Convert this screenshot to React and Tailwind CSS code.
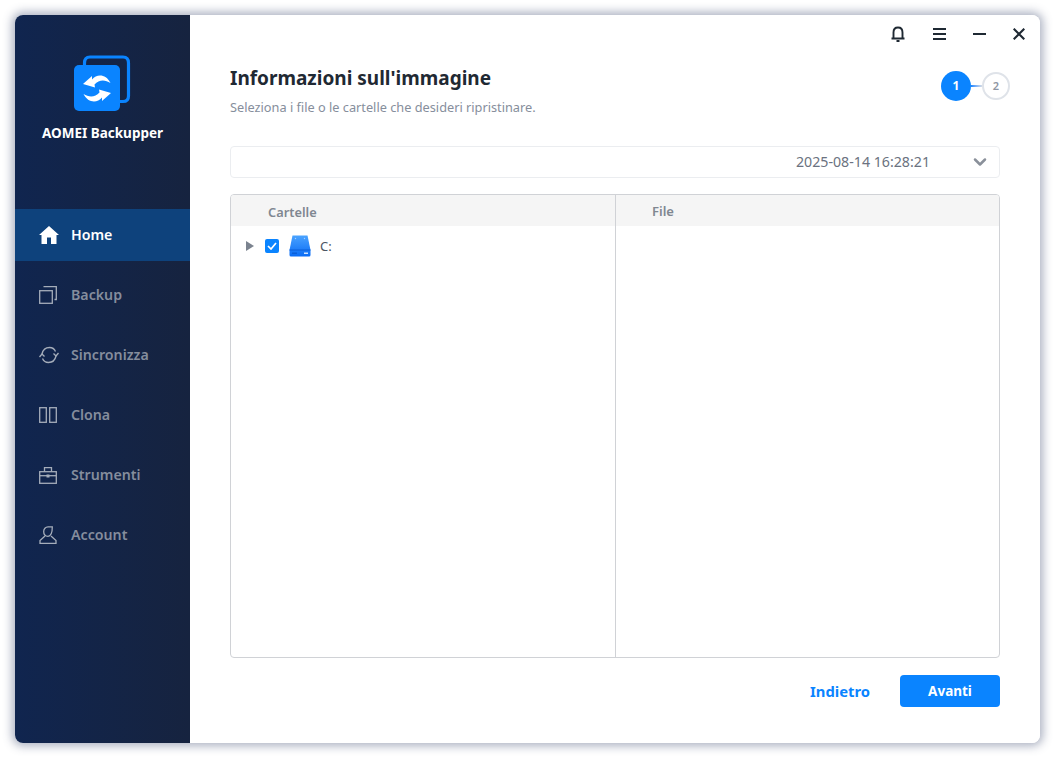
import React from 'react';
import { ChevronDown } from 'lucide-react';

function Logo() {
    const arrow = 'M9 29 L18 21 L18 24.500 C23 18.500 32 19 36.500 28 C31 24.500 25 24.500 20.500 29.500 L21 32.500 Z';
    return (
        <svg width="58" height="58" viewBox="0 0 58 58" fill="none">
            <path d="M10.500 10 V8 Q10.500 2 16 2 H49 Q54.500 2 54.500 8 V41 Q54.500 46.500 49 46.500 H44" stroke="#0a84ff" strokeWidth="3.200" />
            <rect x="0" y="10" width="46" height="46" rx="5" fill="#0a84ff" />
            <path d={arrow} fill="#fff" />
            <path d={arrow} transform="rotate(180 23 33.500)" fill="#fff" />
        </svg>
    );
}

function HomeIcon() {
    return (
        <svg width="20" height="18" viewBox="0 0 20 18" fill="#fff">
            <path d="M10 0 L20 9 H17.500 V18 H12 V11.500 H8 V18 H2.500 V9 H0 Z" />
        </svg>
    );
}

function BackupIcon() {
    return (
        <svg width="18" height="18" viewBox="0 0 18 18" fill="none" stroke="currentColor" strokeWidth="1.300">
            <rect x="0.700" y="4.700" width="12.600" height="12.600" />
            <path d="M4.500 0.700 H17.300 V13.500 H15.500" />
        </svg>
    );
}

function SyncIcon() {
    return (
        <svg width="20" height="18" viewBox="0 0 20 18" fill="none" stroke="currentColor" strokeWidth="1.300">
            <path d="M3 8 C4 3.500 7 1.500 10.500 1.500 C13.500 1.500 15.500 3 16.500 5.500" />
            <path d="M17 10 C16 14.500 13 16.500 9.500 16.500 C6.500 16.500 4.500 15 3.500 12.500" />
            <path d="M0.500 11 L3 8 L5.500 10.500" />
            <path d="M19.500 7 L17 10 L14.500 7.500" />
        </svg>
    );
}

function CloneIcon() {
    return (
        <svg width="18" height="16" viewBox="0 0 18 16" fill="none" stroke="currentColor" strokeWidth="1.300">
            <rect x="0.700" y="0.700" width="6.600" height="14.600" />
            <rect x="10.700" y="0.700" width="6.600" height="14.600" />
        </svg>
    );
}

function ToolsIcon() {
    return (
        <svg width="18" height="17" viewBox="0 0 18 17" fill="none" stroke="currentColor" strokeWidth="1.300">
            <rect x="0.700" y="4.700" width="16.600" height="11.600" />
            <path d="M5.500 4.500 V0.700 H12.500 V4.500" />
            <path d="M0.700 8.700 H17.300" />
            <rect x="7.500" y="7.500" width="3" height="3" fill="currentColor" stroke="none" />
        </svg>
    );
}

function AccountIcon() {
    return (
        <svg width="18" height="18" viewBox="0 0 18 18" fill="none" stroke="currentColor" strokeWidth="1.300">
            <path d="M9 0.800 H13.300 C13.300 6 12 10.300 9 10.300 C6 10.300 4.700 8 4.700 5.500 C4.700 3 6.500 0.800 9 0.800 Z" />
            <path d="M6 10 L1 14.500 V17.300 H17 V14.500 L12 10" />
        </svg>
    );
}

function BellIcon() {
    return (
        <svg width="16" height="16" viewBox="0 0 16 16" fill="none" stroke="#1f2933" strokeWidth="1.900">
            <path d="M3.500 12.500 V6.500 C3.500 3.500 5 1.500 8 1.500 C11 1.500 12.500 3.500 12.500 6.500 V12.500" />
            <path d="M1.500 12.500 H14.500" />
            <path d="M6.500 15 H9.500" />
        </svg>
    );
}

function MenuIcon() {
    return (
        <svg width="13" height="12" viewBox="0 0 13 12" stroke="#1f2933" strokeWidth="2">
            <path d="M0 1 H13 M0 6 H13 M0 11 H13" />
        </svg>
    );
}

function MinIcon() {
    return (
        <svg width="13" height="2" viewBox="0 0 13 2" stroke="#1f2933" strokeWidth="2">
            <path d="M0 1 H13" />
        </svg>
    );
}

function CloseIcon() {
    return (
        <svg width="12" height="12" viewBox="0 0 12 12" stroke="#1f2933" strokeWidth="2.100">
            <path d="M0.700 0.700 L11.300 11.300 M11.300 0.700 L0.700 11.300" />
        </svg>
    );
}

function DriveIcon() {
    return (
        <svg width="22" height="22" viewBox="0 0 22 22">
            <defs>
                <linearGradient id="drive" x1="0" y1="0" x2="0" y2="1">
                    <stop offset="0" stopColor="#4aa3ff" />
                    <stop offset="1" stopColor="#0a6cf5" />
                </linearGradient>
            </defs>
            <path d="M3.500 0.500 H18.500 L21.500 15 V20 Q21.500 21.500 20 21.500 H2 Q0.500 21.500 0.500 20 V15 Z" fill="url(#drive)" />
            <path d="M0.500 15 H21.500" stroke="#0a5fd8" strokeWidth="1" />
            <rect x="15" y="17.500" width="4" height="1.500" fill="#cfe4ff" />
            <rect x="3" y="17.500" width="5" height="1.500" fill="#0a5fd8" />
            <circle cx="6.500" cy="3.500" r="0.700" fill="#a8d0ff" />
            <circle cx="15.500" cy="3.500" r="0.700" fill="#a8d0ff" />
        </svg>
    );
}

const navItems = [
    { label: 'Backup', icon: <BackupIcon /> },
    { label: 'Sincronizza', icon: <SyncIcon /> },
    { label: 'Clona', icon: <CloneIcon /> },
    { label: 'Strumenti', icon: <ToolsIcon /> },
    { label: 'Account', icon: <AccountIcon /> },
];

export default function App() {
    return (
        <div className="w-[1055px] h-[758px] pt-[15px] pl-[15px] bg-white font-['Noto_Sans',sans-serif]">
            <div className="w-[1025px] h-[728px] flex rounded-lg overflow-hidden shadow-[0_0_10px_3px_rgba(70,85,120,0.45)]">
                <aside className="w-[175px] shrink-0 flex flex-col bg-gradient-to-r from-[#10254f] to-[#16233f]">
                    <div className="h-[190px] pt-10 flex flex-col items-center">
                        <div className="ml-[1px]"><Logo /></div>
                        <div className="mt-[10px] text-[13.500px] leading-5 font-bold text-white">AOMEI Backupper</div>
                    </div>
                    <div className="mt-1 h-[52px] flex items-center pl-6 bg-[#0e427c] text-white">
                        <div className="w-8 shrink-0"><HomeIcon /></div>
                        <span className="text-[14.200px] font-semibold">Home</span>
                    </div>
                    <div className="mt-1 flex flex-col">
                        {navItems.map((item) => (
                            <div key={item.label} className="h-[60px] flex items-center pl-6 text-[#858d9d]">
                                <div className="w-8 flex items-center shrink-0 text-[#a5adba]">{item.icon}</div>
                                <span className="text-[14.200px] font-semibold">{item.label}</span>
                            </div>
                        ))}
                    </div>
                </aside>

                <main className="flex-1 bg-white flex flex-col">
                    <div className="h-[38px] mb-3 flex items-center justify-end pr-[15px] gap-[27px]">
                        <BellIcon />
                        <MenuIcon />
                        <MinIcon />
                        <CloseIcon />
                    </div>
                    <div className="px-10 flex justify-between">
                        <div>
                            <h1 className="text-[19px] leading-[26px] font-bold text-[#1f2933]">Informazioni sull'immagine</h1>
                            <p className="mt-[7px] text-[12.750px] leading-[18px] text-[#868e9c]">Seleziona i file o le cartelle che desideri ripristinare.</p>
                        </div>
                        <div className="flex items-center self-start mt-[6px] mr-[-10px]">
                            <div className="w-[30px] h-[30px] rounded-full bg-[#0a84ff] text-white text-xs font-bold flex items-center justify-center">1</div>
                            <div className="w-[11px] h-0.5 bg-gradient-to-r from-[#0a84ff] to-[#d6dce4]"></div>
                            <div className="w-[28px] h-[28px] rounded-full border-2 border-[#dfe3e9] text-[#8f96a3] text-[11px] font-semibold flex items-center justify-center">2</div>
                        </div>
                    </div>
                    <div className="mt-[30px] mx-10 h-8 border border-[#ebedf0] rounded-sm flex items-center justify-end pr-[9px]">
                        <span className="text-[14.200px] text-[#6b7280] mr-[40px]">2025-08-14 16:28:21</span>
                        <ChevronDown size={20} strokeWidth={3} className="text-[#8a909a]" />
                    </div>
                    <div className="mt-4 mx-10 h-[464px] border border-[#d0d2d6] rounded flex overflow-hidden">
                        <div className="w-[385px] border-r border-[#d0d2d6] flex flex-col">
                            <div className="h-[31px] bg-[#f5f5f5] pl-[37px] flex items-center pt-[5px] text-[12.800px] font-semibold text-[#808791]">Cartelle</div>
                            <div className="h-[40px] flex items-center pl-[15px]">
                                <span className="w-0 h-0 border-y-[5px] border-y-transparent border-l-[8px] border-l-[#7b838f]"></span>
                                <span className="ml-[11px] w-[14px] h-[14px] rounded-[2px] bg-[#0a84ff] flex items-center justify-center">
                                    <svg width="10" height="8" viewBox="0 0 10 8" fill="none" stroke="#fff" strokeWidth="1.700">
                                        <path d="M1 4 L4 7 L9 1" />
                                    </svg>
                                </span>
                                <span className="ml-[10px]"><DriveIcon /></span>
                                <span className="ml-[9px] pt-px text-[13px] text-[#4b5563]">C:</span>
                            </div>
                        </div>
                        <div className="flex-1">
                            <div className="h-[31px] bg-[#f5f5f5] pl-[36px] flex items-center pt-[2px] text-[13px] font-semibold text-[#808791]">File</div>
                        </div>
                    </div>
                    <div className="mt-[17px] mx-10 flex justify-end items-center">
                        <button className="text-[14.800px] font-bold text-[#0a84ff] mr-[30px]">Indietro</button>
                        <button className="w-[100px] h-8 rounded bg-[#0a84ff] text-[13.500px] font-bold text-white">Avanti</button>
                    </div>
                </main>
            </div>
        </div>
    );
}
